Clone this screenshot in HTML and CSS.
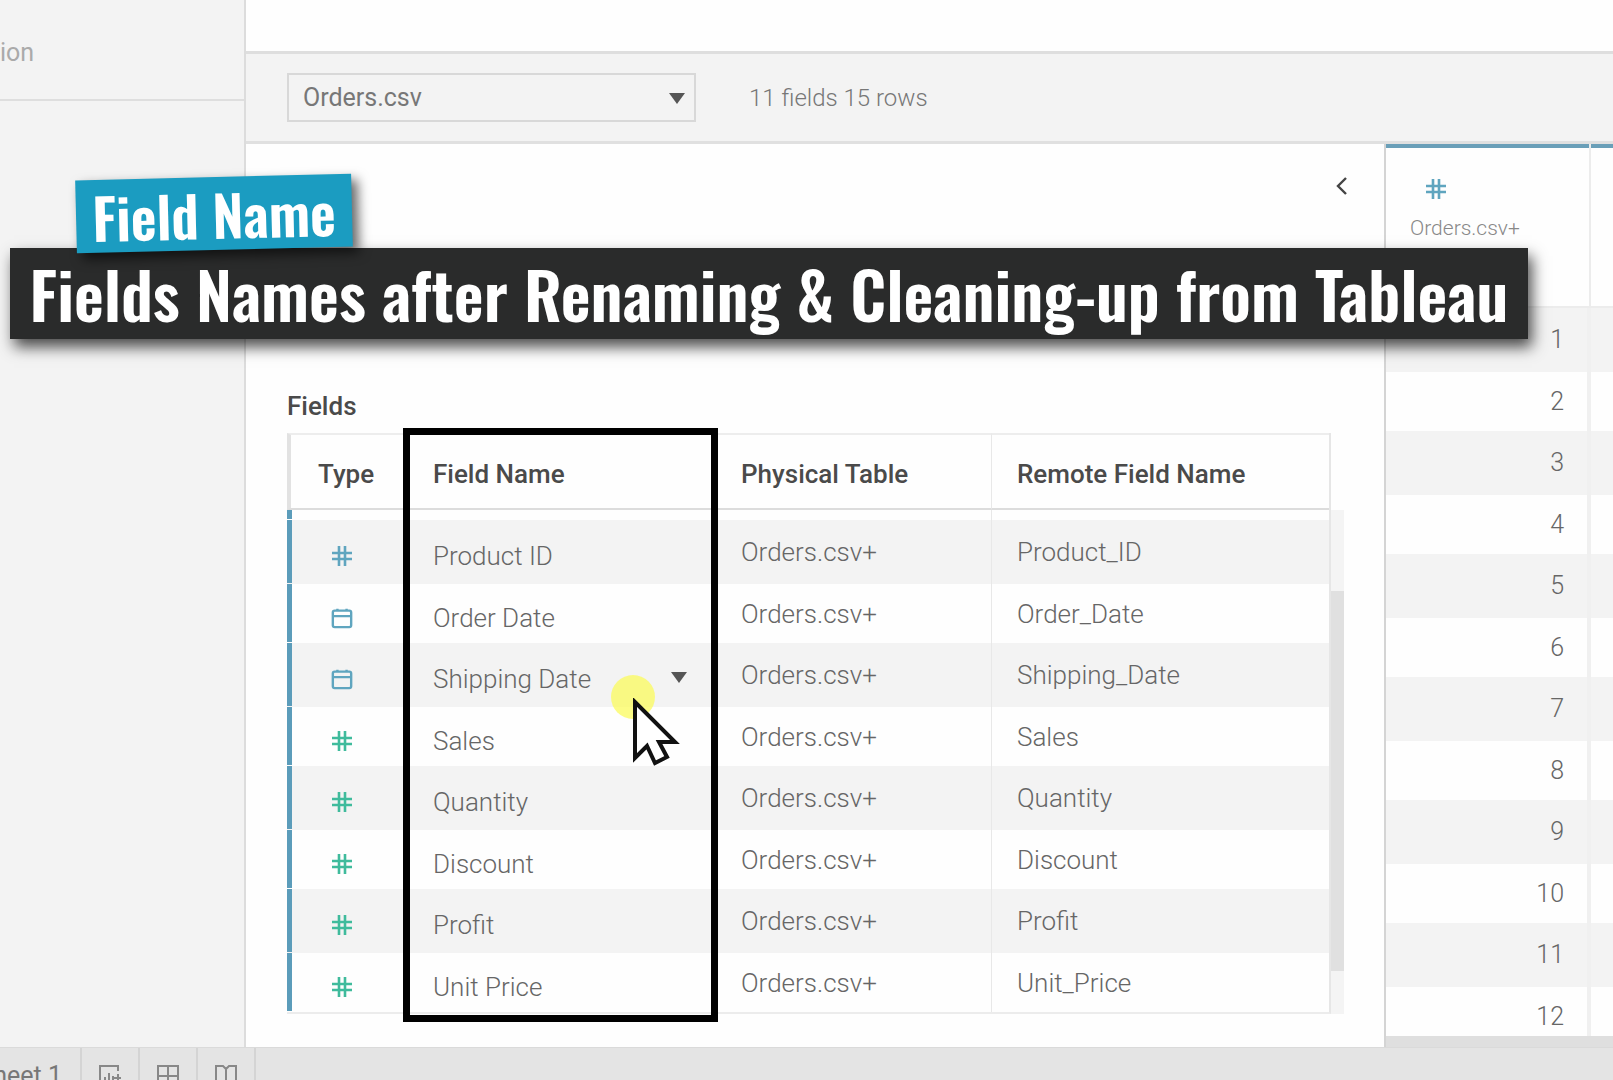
FILE: index.html
```html
<!DOCTYPE html>
<html lang="en">
<head>
<meta charset="utf-8">
<title>Orders data source</title>
<link rel="stylesheet" href="styles.css">
</head>
<body>
<svg class="sprite" aria-hidden="true">
  <symbol id="hash" viewBox="0 0 22 22"><path d="M8 1v20M14 1v20M1 8h20M1 14h20" fill="none" stroke="currentColor" stroke-width="2.6"/></symbol>
  <symbol id="calendar" viewBox="0 0 24 22"><path d="M4 3h16q2 0 2 2v14q0 2-2 2H4q-2 0-2-2V5q0-2 2-2zM2 9h20M7 1v3M17 1v3" fill="none" stroke="currentColor" stroke-width="2.6"/></symbol>
  <symbol id="caret" viewBox="0 0 16 11"><path d="M0 0h16L8 11z" fill="currentColor"/></symbol>
</svg>

<div class="workspace">
  <aside class="sidebar">
    <div class="connection"><span>ion</span></div>
  </aside>
  <main class="main">
    <div class="canvas"></div>
    <header class="toolbar">
      <div class="picker">
        <select class="picker-select" aria-label="Table"><option>Orders.csv</option></select>
        <svg class="caret picker-caret"><use href="#caret"/></svg>
      </div>
      <span class="summary">11 fields 15 rows</span>
    </header>
    <div class="panes">
      <section class="metadata">
        <button class="collapse" aria-label="Collapse"><svg viewBox="0 0 12 20"><path d="M10 2L2 10l8 8" fill="none" stroke="currentColor" stroke-width="2.4"/></svg></button>
        <h2 class="heading">Fields</h2>
        <div class="fields-wrap">
          <table class="fields">
            <thead><tr><th class="type">Type</th><th class="name">Field Name</th><th class="physical">Physical Table</th><th>Remote Field Name</th></tr></thead>
            <tbody>
              <tr class="partial"><td></td><td></td><td></td><td></td></tr>
              <tr><td class="type"><svg class="icon"><use href="#hash"/></svg></td><td class="name">Product ID</td><td>Orders.csv+</td><td>Product_ID</td></tr>
              <tr><td class="type"><svg class="icon"><use href="#calendar"/></svg></td><td class="name">Order Date</td><td>Orders.csv+</td><td>Order_Date</td></tr>
              <tr><td class="type"><svg class="icon"><use href="#calendar"/></svg></td><td class="name"><div class="active">Shipping Date<button class="more" aria-label="Field menu"><svg class="caret"><use href="#caret"/></svg></button></div></td><td>Orders.csv+</td><td>Shipping_Date</td></tr>
              <tr><td class="type measure"><svg class="icon"><use href="#hash"/></svg></td><td class="name">Sales</td><td>Orders.csv+</td><td>Sales</td></tr>
              <tr><td class="type measure"><svg class="icon"><use href="#hash"/></svg></td><td class="name">Quantity</td><td>Orders.csv+</td><td>Quantity</td></tr>
              <tr><td class="type measure"><svg class="icon"><use href="#hash"/></svg></td><td class="name">Discount</td><td>Orders.csv+</td><td>Discount</td></tr>
              <tr><td class="type measure"><svg class="icon"><use href="#hash"/></svg></td><td class="name">Profit</td><td>Orders.csv+</td><td>Profit</td></tr>
              <tr><td class="type measure"><svg class="icon"><use href="#hash"/></svg></td><td class="name">Unit Price</td><td>Orders.csv+</td><td>Unit_Price</td></tr>
            </tbody>
          </table>
          <div class="track"><div class="thumb"></div></div>
        </div>
      </section>
      <section class="preview">
        <table class="grid">
          <thead><tr><th><svg class="icon"><use href="#hash"/></svg><span>Orders.csv+</span></th><th></th></tr></thead>
          <tbody>
            <tr><td>1</td><td></td></tr>
            <tr><td>2</td><td></td></tr>
            <tr><td>3</td><td></td></tr>
            <tr><td>4</td><td></td></tr>
            <tr><td>5</td><td></td></tr>
            <tr><td>6</td><td></td></tr>
            <tr><td>7</td><td></td></tr>
            <tr><td>8</td><td></td></tr>
            <tr><td>9</td><td></td></tr>
            <tr><td>10</td><td></td></tr>
            <tr><td>11</td><td></td></tr>
            <tr><td>12</td><td></td></tr>
          </tbody>
        </table>
        <div class="hscroll"></div>
      </section>
    </div>
  </main>
</div>

<nav class="sheets">
  <button class="sheet"><span>Sheet 1</span></button>
  <button class="tool" aria-label="New worksheet"><svg viewBox="0 0 24 24"><path d="M20 7V2H2v20h18M7 18v-5M11 18V9M15 18v-6M16 14h7M20 10v8" fill="none" stroke="currentColor" stroke-width="2"/></svg></button>
  <button class="tool" aria-label="New dashboard"><svg viewBox="0 0 24 24"><path d="M2 2h20v20H2zM12 2v20M2 12h20" fill="none" stroke="currentColor" stroke-width="2"/></svg></button>
  <button class="tool" aria-label="New story"><svg viewBox="0 0 24 24"><path d="M12 5L9 2H2v18h7l3 2 3-2h7V2h-7zM12 5v17" fill="none" stroke="currentColor" stroke-width="2"/></svg></button>
</nav>

<div class="frame"></div>
<div class="spot"></div>
<svg class="cursor" viewBox="0 0 52 72"><path d="M4 4v56l12-12 8 17 12-6-8-15h16z" fill="#fff" stroke="#111" stroke-width="4"/></svg>
<p class="banner">Fields Names after Renaming &amp; Cleaning-up from Tableau</p>
<p class="tag">Field Name</p>
</body>
</html>
```
FILE: styles.css
```css
* { box-sizing: border-box; }

body {
  margin: 0;
  height: 100vh;
  overflow: hidden;
  display: flex;
  flex-direction: column;
  position: relative;
  font: 300 26px/32px Roboto, "Liberation Sans", sans-serif;
  color: #666;
  background: #fefefe;
}

button, select { font: inherit; color: inherit; border: 0; padding: 0; background: none; }
.sprite { position: absolute; width: 0; height: 0; }

.workspace { flex: 1; min-height: 0; display: flex; }

.sidebar { flex: 0 0 246px; background: #f3f3f3; border-right: 2px solid #dcdcdc; }
.connection {
  height: 101px;
  padding-top: 6px;
  display: flex;
  align-items: center;
  border-bottom: 2px solid #dedede;
  font-size: 25px;
  font-weight: 400;
  color: #aaa;
}

.main { flex: 1; min-width: 0; display: flex; flex-direction: column; }
.canvas { flex: 0 0 51px; }
.toolbar {
  flex: 0 0 93px;
  display: flex;
  align-items: center;
  gap: 53px;
  padding: 0 41px;
  background: #f3f3f3;
  border-top: 3px solid #dedede;
  border-bottom: 3px solid #e0e0e0;
}
.picker { position: relative; width: 409px; height: 49px; }
.picker-select {
  appearance: none;
  width: 100%;
  height: 100%;
  padding: 0 14px;
  border: 2px solid #d8d8d8;
  font-size: 25px;
  font-weight: 400;
  color: #777;
}
.caret { display: block; width: 16px; height: 11px; color: #555; }
.picker-caret { position: absolute; right: 11px; top: 20px; }
.summary { font-size: 24px; color: #777; }

.panes { flex: 1; min-height: 0; display: flex; }
.metadata { flex: 1; min-width: 0; padding: 0 40px 0 41px; display: flex; flex-direction: column; border-right: 2px solid #d4d4d4; }
.collapse { align-self: flex-end; margin: 32px -4px 0 0; width: 12px; height: 20px; color: #444; }
.collapse svg { display: block; width: 12px; height: 20px; }
.heading { margin: 194px 0 11px; font-size: 26px; line-height: 32px; font-weight: 500; color: #4a4a4a; }

.fields-wrap { display: flex; align-items: flex-start; }
.fields { flex: 1; border-collapse: separate; border-spacing: 0; table-layout: fixed; border-right: 2px solid #e6e6e6; border-bottom: 2px solid #ececec; }
.fields th, .fields td { padding: 0 0 0 25px; text-align: left; border-right: 1px solid #e8e8e8; }
.fields th:last-child, .fields td:last-child { border-right: 0; }
.fields th { height: 77px; padding-top: 4px; font-weight: 500; color: #4a4a4a; border-top: 2px solid #ededed; border-bottom: 2px solid #dcdcdc; }
.fields th.type { width: 121px; padding-left: 27px; border-left: 4px solid #e2e2e2; }
.fields th.name { width: 308px; }
.fields th.physical { width: 276px; }
.fields td { height: 59px; }
.fields tr:nth-child(even) td { height: 64px; background-color: #f3f3f3; }
.fields tbody td:first-child { background-image: linear-gradient(#5b9cba, #5b9cba); background-size: 5px calc(100% - 1px); background-repeat: no-repeat; }
.fields .partial td { height: 10px; padding: 0; }
.fields td.type, .fields td.name { padding-top: 8px; }
.fields td.type { padding-left: 44px; color: #5fa5bf; }
.fields td.measure { color: #3fbb9c; }
.icon { display: block; width: 22px; height: 22px; }
.active { display: flex; align-items: center; justify-content: space-between; padding-right: 28px; }
.more { padding-bottom: 4px; }

.track { align-self: stretch; width: 13px; margin-top: 77px; padding-top: 81px; background: #f4f4f4; }
.thumb { height: 380px; background: #e0e0e0; }

.preview { flex: 0 0 227px; display: flex; flex-direction: column; overflow: hidden; position: relative; }
.grid { width: 100%; border-collapse: separate; border-spacing: 0; table-layout: fixed; font-size: 25px; }
.grid th { height: 164px; padding: 34px 0 0 24px; text-align: left; vertical-align: top; font-size: 21px; font-weight: 300; color: #888; box-shadow: inset 0 4px #6a9fb8; border-bottom: 2px solid #ececec; }
.grid th:first-child { width: 205px; border-right: 2px solid #ececec; }
.grid th .icon { margin: 0 0 12px 15px; color: #5fa5bf; }
.grid th span { display: block; }
.grid td { height: 59px; padding: 0 23px 0 0; text-align: right; border-right: 4px solid #f0f0f0; }
.grid tr:nth-child(odd) td { height: 64px; background: #f3f3f3; }
.grid td:last-child { border-right: 0; }
.hscroll { position: absolute; left: 0; right: 0; bottom: 0; height: 11px; background: #dfdfdf; }

.sheets { flex: 0 0 33px; overflow: hidden; display: flex; align-items: flex-start; background: #e4e4e4; border-top: 1px solid #dadada; }
.sheets button { height: 56px; border-right: 2px solid #d4d4d4; }
.sheet { width: 82px; display: flex; align-items: center; font-size: 25px; font-weight: 400; color: #777; }
.sheet span { width: 62px; display: flex; justify-content: flex-end; white-space: nowrap; }
.tool { width: 58px; display: flex; justify-content: center; align-items: center; color: #888; }
.tool svg { width: 24px; height: 24px; }

.frame { position: absolute; left: 403px; top: 428px; width: 315px; height: 594px; border: 7px solid #000; }
.spot { position: absolute; left: 611px; top: 675px; width: 44px; height: 44px; border-radius: 50%; background: #fbfb5c; opacity: 0.75; }
.cursor { position: absolute; left: 631px; top: 698px; width: 52px; height: 72px; }
.banner, .tag { position: absolute; margin: 0; color: #fff; font-family: Oswald, "Roboto Condensed", "Open Sans Condensed", "Liberation Sans Narrow", "Liberation Sans", sans-serif; font-weight: 600; white-space: nowrap; text-align: center; }
.banner { left: 10px; top: 248px; width: 1518px; height: 91px; font-size: 65px; line-height: 90px; background: #2a2b2b; box-shadow: 4px 8px 14px rgba(0, 0, 0, 0.7); }
.tag { left: 76px; top: 177px; width: 276px; height: 73px; font-size: 56px; line-height: 73px; background: #1b9cc1; box-shadow: 6px 6px 12px rgba(0, 0, 0, 0.6); transform: rotate(-1.4deg); }
```
